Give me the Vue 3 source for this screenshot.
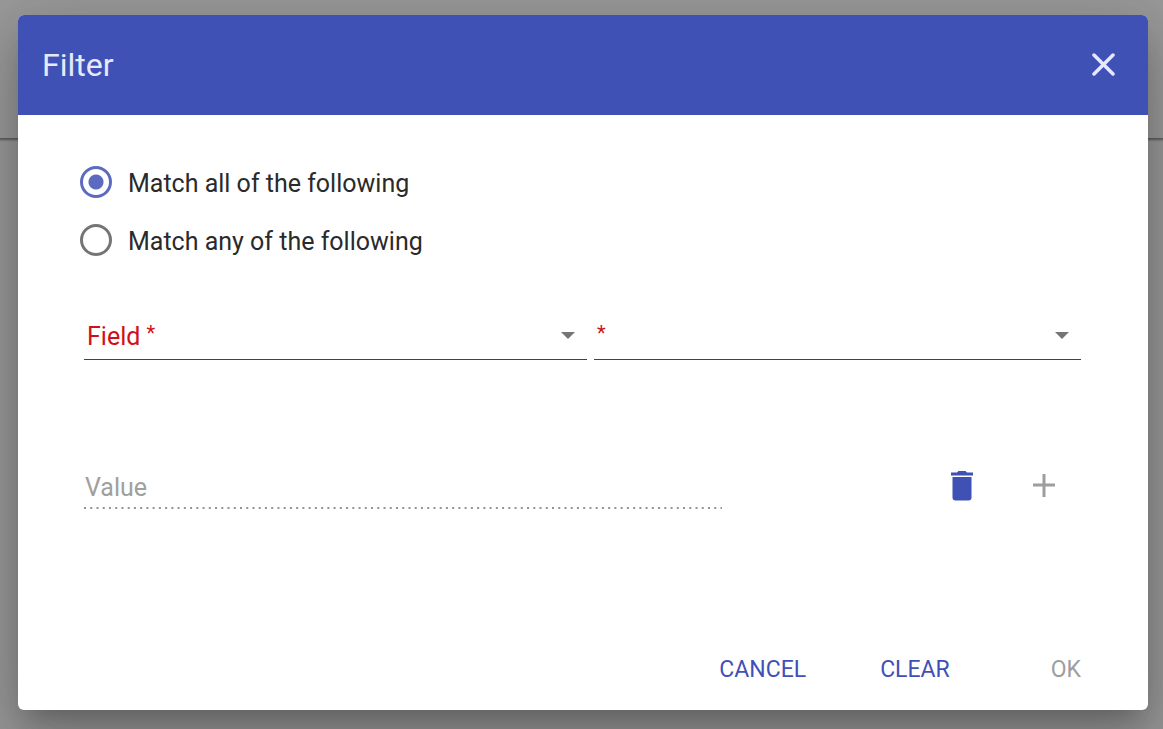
<script setup>
import { ref } from 'vue'

const match = ref('all')
const field = ref('')
const operator = ref('')
const value = ref('')
const modes = [
  { id: 'all', label: 'Match all of the following' },
  { id: 'any', label: 'Match any of the following' },
]
</script>

<template>
  <div class="page">
    <div class="topbar"></div>
    <div class="backdrop">
      <section class="dialog" role="dialog" aria-modal="true" aria-labelledby="dialog-title">
        <header class="header">
          <h1 id="dialog-title" class="title">Filter</h1>
          <button class="close" type="button" aria-label="Close">
            <svg width="24" height="24" viewBox="0 0 24 24" fill="none" stroke="currentColor" stroke-width="3.5" stroke-linecap="round">
              <path d="M3 2 22 21M22 2 3 21" />
            </svg>
          </button>
        </header>

        <form class="body" @submit.prevent>
          <div class="modes" role="radiogroup" aria-labelledby="dialog-title">
            <label v-for="m in modes" :key="m.id" class="mode">
              <input v-model="match" class="radio" type="radio" name="match" :value="m.id" />
              <span class="mode-text">{{ m.label }}</span>
            </label>
          </div>

          <div class="criteria">
            <div class="field">
              <label class="label" for="field">Field <sup>*</sup></label>
              <select id="field" v-model="field" class="control" required></select>
              <svg class="arrow" width="14" height="7" viewBox="0 0 14 7"><path d="M0 0h14L7 7z" fill="currentColor" /></svg>
            </div>
            <div class="field">
              <label class="label" for="operator"><sup>*</sup></label>
              <select id="operator" v-model="operator" class="control" required></select>
              <svg class="arrow" width="14" height="7" viewBox="0 0 14 7"><path d="M0 0h14L7 7z" fill="currentColor" /></svg>
            </div>
          </div>

          <div class="value-row">
            <div class="value-field">
              <label class="value-label" for="value">Value</label>
              <input id="value" v-model="value" class="control" type="text" disabled />
              <svg class="dots" width="100%" height="2" aria-hidden="true">
                <line x1="0" y1="1" x2="100%" y2="1" stroke="#949494" stroke-width="2" stroke-dasharray="2 4.24" />
              </svg>
            </div>
            <div class="tools">
              <button class="tool" type="button" aria-label="Delete">
                <svg width="24" height="32" viewBox="0 -2 24 32" fill="currentColor">
                  <path d="M1 1.500h6L8.500 0h7L17 1.500h6v3H1zM2.500 6h19v20.500q0 3-3 3h-13q-3 0-3-3z" />
                </svg>
              </button>
              <button class="tool" type="button" aria-label="Add" disabled>
                <svg width="24" height="24" viewBox="0 0 24 24" fill="none" stroke="currentColor" stroke-width="3">
                  <path d="M12 1v23M1 12h22" />
                </svg>
              </button>
            </div>
          </div>

          <footer class="actions">
            <button class="action" type="button">CANCEL</button>
            <button class="action" type="button">CLEAR</button>
            <button class="action ok" type="submit" disabled>OK</button>
          </footer>
        </form>
      </section>
    </div>
  </div>
</template>

<style>
body {
  margin: 0;
}
</style>

<style scoped>
.page {
  display: grid;
  min-height: 100vh;
  overflow: hidden;
  background: #989898;
  font-family: Roboto, "Liberation Sans", sans-serif;
  font-size: 25px;
  color: #2a2a2a;
}
.topbar,
.backdrop {
  grid-area: 1 / 1;
}
.topbar {
  height: 138px;
  box-sizing: border-box;
  background: #999;
  box-shadow: 0 1px 2px 1px rgba(0, 0, 0, 0.4);
}
.backdrop {
  position: relative;
  padding: 15px 15px 19px 18px;
}
.dialog {
  border-radius: 6px;
  background: #fff;
  box-shadow:
    0 16px 22px -10px rgba(0, 0, 0, 0.2),
    0 36px 57px 4px rgba(0, 0, 0, 0.14),
    0 14px 69px 12px rgba(0, 0, 0, 0.12);
}
.header {
  display: flex;
  align-items: center;
  justify-content: space-between;
  height: 100px;
  padding: 0 33px 0 24px;
  border-radius: 6px 6px 0 0;
  background: #3f51b5;
  color: #e6e9fb;
}
.title {
  margin: 0;
  font-size: 32px;
  line-height: 40px;
  font-weight: 400;
}
button {
  display: inline-flex;
  align-items: center;
  justify-content: center;
  padding: 0;
  border: 0;
  background: none;
  color: #3f51b5;
  font: inherit;
  cursor: pointer;
}
button:disabled {
  color: #9e9e9e;
  cursor: default;
}
.close {
  color: inherit;
}
.body {
  padding: 47px 67px 22px 66px;
}
.modes {
  display: grid;
  gap: 18px;
  margin-left: -4px;
}
.mode {
  display: flex;
  align-items: center;
  gap: 16px;
  height: 40px;
  line-height: 40px;
}
.mode-text {
  padding-top: 4px;
}
.radio {
  appearance: none;
  width: 32px;
  height: 32px;
  margin: 0;
  border: 3px solid #757575;
  border-radius: 50%;
}
.radio:checked {
  border-color: #5c6bc0;
  background: radial-gradient(circle, #5c6bc0 7px, transparent 8px);
}
.criteria {
  display: grid;
  grid-template-columns: 503fr 487fr;
  gap: 7px;
  margin-top: 53px;
}
.field,
.value-field {
  display: grid;
  align-items: center;
}
.field {
  border-bottom: 1px solid #a8161c;
}
.field > *,
.value-field > .value-label,
.value-field > .control {
  grid-area: 1 / 1;
}
.label {
  padding: 2px 0 0 3px;
  color: #d01018;
  line-height: 40px;
}
.label sup {
  font-size: 20px;
  line-height: 0;
  vertical-align: 5px;
}
.control {
  appearance: none;
  width: 100%;
  height: 46px;
  margin: 0;
  padding: 0;
  border: 0;
  background: none;
  font: inherit;
}
.arrow {
  justify-self: end;
  margin: 0 12px 2px 0;
  color: #757575;
}
.value-row {
  display: flex;
  align-items: center;
  justify-content: space-between;
  margin-top: 101px;
}
.value-field {
  width: 64%;
}
.value-label {
  padding: 6px 0 0 1px;
  color: #a0a0a0;
}
.tools {
  display: flex;
  align-items: center;
  gap: 58px;
  margin-right: 25px;
}
.tool {
  width: 24px;
  height: 40px;
}
.actions {
  display: flex;
  justify-content: flex-end;
  margin-top: 139px;
}
.action {
  height: 40px;
  margin-left: 74px;
  padding-top: 2px;
  font-size: 23px;
}
.ok {
  margin-left: 101px;
}
</style>
